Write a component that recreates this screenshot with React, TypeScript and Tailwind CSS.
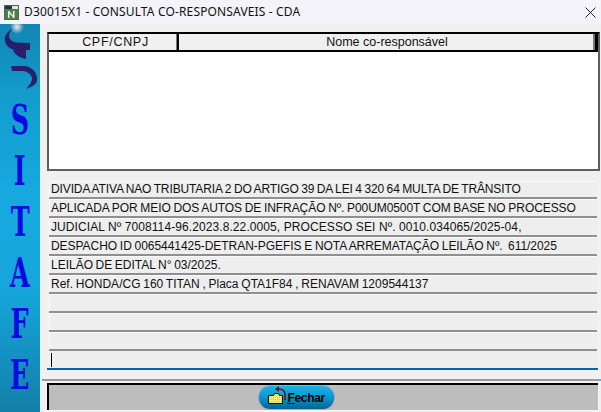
const rows = [
  { t: "DIVIDA ATIVA NAO TRIBUTARIA 2 DO ARTIGO 39 DA LEI 4 320 64 MULTA DE TRÂNSITO", c: "tracking-[-0.12px] [word-spacing:-0.67px]" },
  { t: "APLICADA POR MEIO DOS AUTOS DE INFRAÇÃO Nº. P00UM0500T COM BASE NO PROCESSO", c: "tracking-[-0.08px] [word-spacing:-0.5px]" },
  { t: "JUDICIAL Nº 7008114-96.2023.8.22.0005, PROCESSO SEI Nº. 0010.034065/2025-04,", c: "tracking-[0.09px]" },
  { t: "DESPACHO ID 0065441425-DETRAN-PGEFIS E NOTA ARREMATAÇÃO LEILÃO Nº.  611/2025", c: "tracking-[-0.05px] [word-spacing:-0.5px]" },
  { t: "LEILÃO DE EDITAL N° 03/2025.", c: "[word-spacing:-0.75px]" },
  { t: "Ref. HONDA/CG 160 TITAN , Placa QTA1F84 , RENAVAM 1209544137", c: "[word-spacing:-0.55px]" },
  { t: "", c: "" },
  { t: "", c: "" },
  { t: "", c: "" },
];

const letters = ["S", "I", "T", "A", "F", "E"];

export default function App() {
  return (
    <div className="w-[601px] h-[412px] overflow-hidden flex flex-col bg-[#f0f0f0] text-[#111]" style={{ fontFamily: '"Liberation Sans", Arial, sans-serif' }}>
      <header className="h-6 shrink-0 bg-[#f3f3f9] flex items-center pl-1 pr-[5px]">
        <svg width="15" height="15" viewBox="0 0 15 15" className="shrink-0">
          <rect width="15" height="15" fill="#41704a" />
          <rect x="1" y="1" width="7" height="3" fill="#26324a" />
          <rect x="8" y="1" width="6" height="3" fill="#dfe8da" />
          <rect x="1" y="4" width="13" height="10" fill="#4f7e4a" />
          <path d="M4 13V6h1.3l3.7 4.4V6H10.5v7H9.4L5.4 8.2V13Z" fill="#f2f6e6" />
        </svg>
        <span className="ml-[5px] text-[12px] leading-none tracking-[0.15px] whitespace-pre" style={{ fontFamily: '"Noto Sans", "Liberation Sans", sans-serif' }}>D30015X1 - CONSULTA CO-RESPONSAVEIS - CDA</span>
        <svg width="11" height="11" viewBox="0 0 11 11" className="ml-auto" fill="none" stroke="#222" strokeWidth="1"><path d="M.5.5l10 10M10.5.5l-10 10" /></svg>
      </header>

      <div className="flex-1 flex min-h-0">
        <aside className="w-10 shrink-0 flex flex-col items-center bg-[linear-gradient(180deg,#1285b4_0%,#139ccc_18%,#16a9e0_45%,#15a5d9_70%,#127fa9_100%)]">
          <svg width="40" height="76" viewBox="0 0 40 76" className="shrink-0">
            <defs>
              <radialGradient id="glow"><stop offset="0" stopColor="#f6e8e4" /><stop offset="1" stopColor="#f6e8e4" stopOpacity="0" /></radialGradient>
            </defs>
            <circle cx="17" cy="3" r="7" fill="url(#glow)" />
            <path d="M13 4C7 8 4 12 5 17C6 22 10 25 15 26L30 26V19L17 18.5C12 18 9 15 9 12C9 9 11 6 13 4Z" fill="#2a1f6b" />
            <path d="M13 26L26 26L26 35C20 34 15 31 13 26Z" fill="#2a1f6b" />
            <path d="M11 42L25 42C32 43 38 49 37 56C37 60 33 62 26 65C29 62 32 58 32 54C31 50 27 47 22 47L12 47Z" fill="#2a1f6b" />
          </svg>
          <div className="flex flex-col items-center gap-[15px] pt-[2px]">
            {letters.map((l) => (
              <span key={l} className="h-9 flex items-center text-[41px] leading-none font-bold text-[#0a0ae2] scale-x-[0.62]" style={{ fontFamily: '"DejaVu Serif", serif' }}>{l}</span>
            ))}
          </div>
        </aside>

        <main className="flex-1 min-w-0 flex flex-col pl-[2px]">
          <div className="flex-1 min-h-0 flex flex-col pl-[5px] pr-[3px] pt-2">
            <section className="h-[139px] shrink-0 -mr-[2px] bg-white border-2 border-[#5f5f5f] border-t-black flex flex-col">
              <div className="h-[18px] shrink-0 flex bg-[#f0f0f0] border-b-2 border-black text-[12.5px] leading-[16px] text-center">
                <div className="w-[130px] shrink-0 pl-[5px] border-r-2 border-black shadow-[inset_-1px_0_#777] tracking-[0.7px]">CPF/CNPJ</div>
                <div className="flex-1 border-r-[3px] border-black shadow-[inset_-2px_0_#777]">Nome co-responsável</div>
              </div>
            </section>

            <div className="mt-[10px] pl-[2px] pr-[1px]">
              {rows.map((r, i) => (
                <div key={i} className={`h-[19px] border-b-[2px] border-[#8f8f8f] bg-[#eeeeee] shadow-[inset_1px_1px_#fafafa] pl-[2px] text-[12px] leading-[18px] whitespace-pre overflow-hidden first:h-[18px] first:leading-[17px] ${r.c}`}>{r.t}</div>
              ))}
              <div className="h-[17px] flex items-center pl-[2px] bg-[#eeeeee]"><span className="w-px h-[14px] bg-black" /></div>
            </div>
            <div className="h-[2px] shrink-0 bg-[#0063b8]" />
          </div>

          <footer className="h-[33px] shrink-0 bg-[#f0f0f0] border-t-2 border-[#9a9a9a] pl-[5px] pr-[3px] pb-[2px] pt-[2px] flex flex-col">
            <div className="flex-1 flex items-center bg-[#bdbdbd] border-t-2 border-l-2 border-black outline-1 outline-[#f4f4f4] pl-[210px]">
              <button className="relative w-[75px] h-[23px] rounded-[11px] bg-[linear-gradient(180deg,#19b5e8_0%,#0a9ad4_45%,#04648f_100%)] flex items-center justify-end pr-[9px] text-[12px] font-bold tracking-[-0.3px] text-black leading-none shadow-[0_0_0_1px_#a9a5c4]">
                <svg width="20" height="21" viewBox="0 0 20 21" className="absolute left-[8px] -top-[1px]">
                  <defs>
                    <pattern id="chk" width="2" height="2" patternUnits="userSpaceOnUse"><rect width="2" height="2" fill="#f4ee6c" /><rect width="1" height="1" fill="#d8c94a" /></pattern>
                  </defs>
                  <path d="M1.5 10.5h5l1-2h4l1 2h3v8h-14Z" fill="url(#chk)" stroke="#111" strokeWidth="1" />
                  <path d="M12 4C16 4 18 6 18 10V15" fill="none" stroke="#7a0c14" strokeWidth="1.6" />
                  <path d="M8 4l4-3v6Z" fill="#7a0c14" />
                </svg>
                <span className="relative"><span className="underline">F</span>echar</span>
              </button>
            </div>
          </footer>
        </main>
      </div>
    </div>
  );
}
